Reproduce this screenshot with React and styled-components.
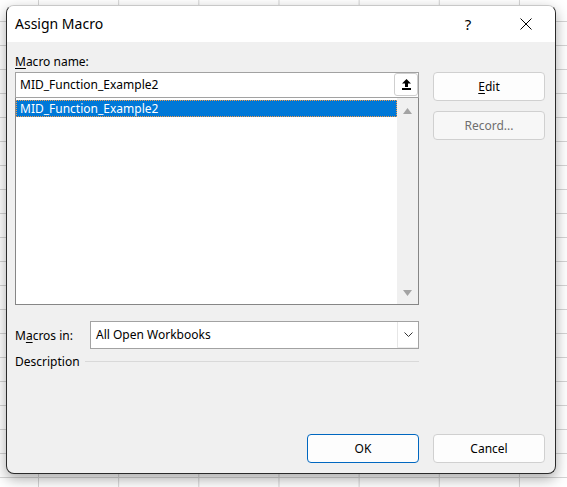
import React from "react";
import styled, { createGlobalStyle } from "styled-components";

const Global = createGlobalStyle`
  html, body { margin: 0; padding: 0; }
  body {
    width: 567px;
    height: 487px;
    overflow: hidden;
    font-family: "Noto Sans", "DejaVu Sans", sans-serif;
    color: #000;
  }
`;

const Sheet = styled.div`
  width: 567px;
  height: 487px;
  box-sizing: border-box;
  padding: 5px 0 0 6px;
  background-color: #ffffff;
  background-image:
    linear-gradient(to right, #d4d4d4 1px, transparent 1px),
    linear-gradient(to bottom, #d4d4d4 1px, transparent 1px);
  background-size: 80.17px 24px;
  background-position: 38px 21px;
`;

const Dialog = styled.div`
  width: 550px;
  height: 469px;
  box-sizing: border-box;
  border: 1px solid #2a2a2a;
  border-top-color: #c8c8c8;
  border-radius: 8px;
  overflow: hidden;
  background: #f0f0f0;
  box-shadow: 0 5px 14px rgba(0, 0, 0, 0.34);
  display: flex;
  flex-direction: column;
`;

const TitleBar = styled.div`
  height: 36px;
  flex: none;
  background: #ffffff;
  display: flex;
  align-items: center;
  padding-left: 8px;
`;

const Title = styled.div`
  flex: 1;
  font-size: 14px;
  line-height: 20px;
`;

const CaptionButton = styled.div`
  width: 58px;
  height: 36px;
  display: flex;
  align-items: center;
  justify-content: center;
  font-size: 15px;
`;

const Body = styled.div`
  flex: 1;
  display: flex;
  flex-direction: column;
  padding: 11px 10px 10px 8px;
  font-size: 12px;
`;

const Columns = styled.div`
  display: grid;
  grid-template-columns: 404px 112px;
  column-gap: 14px;
  align-items: start;
`;

const Label = styled.div`
  line-height: 17px;
  margin-bottom: ${(p) => p.$mb || 0}px;
  white-space: nowrap;
`;

const Key = styled.span`
  text-decoration: underline;
  text-underline-offset: 2px;
`;

const LeftColumn = styled.div`
  display: flex;
  flex-direction: column;
`;

const NameField = styled.div`
  height: 26px;
  box-sizing: border-box;
  border: 1px solid #a2a2a2;
  background: #fff;
  display: flex;
  align-items: flex-start;
`;

const NameText = styled.div`
  flex: 1;
  padding-left: 4px;
  line-height: 24px;
`;

const CollapseButton = styled.div`
  width: 24px;
  height: 23px;
  box-sizing: border-box;
  border: 1px solid #cfcfcf;
  border-radius: 3px;
  background: #fff;
  display: flex;
  align-items: center;
  justify-content: center;
`;

const List = styled.div`
  height: 207px;
  box-sizing: border-box;
  border: 1px solid #868686;
  border-top: none;
  display: flex;
`;

const Items = styled.div`
  flex: 1;
  background: #fff;
  padding-top: 2px;
`;

const Item = styled.div`
  height: 17px;
  box-sizing: border-box;
  background: ${(p) => (p.$selected ? "#0078d7" : "transparent")};
  color: ${(p) => (p.$selected ? "#fff" : "#000")};
  border: 1px dotted ${(p) => (p.$selected ? "#f39b4a" : "transparent")};
  padding-left: 3px;
  line-height: 15px;
  white-space: nowrap;
`;

const ScrollTrack = styled.div`
  width: 21px;
  background: #f0f0f0;
  display: flex;
  flex-direction: column;
  align-items: center;
  justify-content: space-between;
  padding: 10px 0 8px;
  box-sizing: border-box;
`;

const SideButtons = styled.div`
  display: flex;
  flex-direction: column;
  gap: 10px;
  margin-top: 19px;
`;

const Button = styled.div`
  height: 29px;
  box-sizing: border-box;
  width: 112px;
  border: 1px solid ${(p) => (p.$default ? "#0067c0" : "#d0d0d0")};
  border-radius: 4px;
  background: ${(p) => (p.$disabled ? "#f7f7f7" : "#fdfdfd")};
  color: ${(p) => (p.$disabled ? "#6f6f6f" : "#000")};
  display: flex;
  align-items: center;
  justify-content: center;
  font-size: 12px;
  justify-self: ${(p) => p.$align || "start"};
`;

const MacrosRow = styled.div`
  display: flex;
  align-items: center;
  margin-top: 16px;
`;

const RowLabel = styled.div`
  width: 75px;
  flex: none;
`;

const Select = styled.div`
  flex: 1;
  height: 28px;
  box-sizing: border-box;
  border: 1px solid #a2a2a2;
  background: #fff;
  display: flex;
  align-items: stretch;
`;

const SelectText = styled.div`
  flex: 1;
  padding-left: 5px;
  line-height: 26px;
`;

const SelectArrow = styled.div`
  width: 21px;
  box-sizing: border-box;
  border-left: 1px solid #e6e6e6;
  border-bottom: 1px solid #ececec;
  display: flex;
  align-items: center;
  justify-content: center;
`;

const GroupRow = styled.div`
  display: flex;
  align-items: center;
  gap: 5px;
  margin-top: 4px;
  height: 17px;
`;

const GroupLine = styled.div`
  flex: 1;
  height: 1px;
  background: #d9d9d9;
  margin-top: -1px;
`;

const Footer = styled(Columns)`
  margin-top: auto;
`;

const CloseIcon = () => (
  <svg width="12" height="12" viewBox="0 0 12 12">
    <path d="M0.5 0.5 L11.5 11.5 M11.5 0.5 L0.5 11.5" stroke="#000" strokeWidth="1" fill="none" />
  </svg>
);

const UploadIcon = () => (
  <svg width="9" height="11" viewBox="0 0 9 11">
    <path d="M4.5 0 L9 4.5 L6 4.5 L6 8 L3 8 L3 4.5 L0 4.5 Z" fill="#000" />
    <rect x="0" y="9" width="9" height="2" fill="#000" />
  </svg>
);

const Triangle = ({ down }) => (
  <svg width="9" height="6" viewBox="0 0 9 6">
    <path d={down ? "M0 0 L9 0 L4.5 6 Z" : "M4.5 0 L9 6 L0 6 Z"} fill="#a3a3a3" />
  </svg>
);

const Chevron = () => (
  <svg width="9" height="5" viewBox="0 0 9 5">
    <path d="M0.5 0.5 L4.5 4.5 L8.5 0.5" stroke="#333" strokeWidth="1" fill="none" />
  </svg>
);

export default function App() {
  return (
    <>
      <Global />
      <Sheet>
        <Dialog>
          <TitleBar>
            <Title>Assign Macro</Title>
            <CaptionButton>?</CaptionButton>
            <CaptionButton>
              <CloseIcon />
            </CaptionButton>
          </TitleBar>
          <Body>
            <Columns>
              <LeftColumn>
                <Label $mb={2}>
                  <Key>M</Key>acro name:
                </Label>
                <NameField>
                  <NameText>MID_Function_Example2</NameText>
                  <CollapseButton>
                    <UploadIcon />
                  </CollapseButton>
                </NameField>
                <List>
                  <Items>
                    <Item $selected>MID_Function_Example2</Item>
                  </Items>
                  <ScrollTrack>
                    <Triangle />
                    <Triangle down />
                  </ScrollTrack>
                </List>
                <MacrosRow>
                  <RowLabel>
                    M<Key>a</Key>cros in:
                  </RowLabel>
                  <Select>
                    <SelectText>All Open Workbooks</SelectText>
                    <SelectArrow>
                      <Chevron />
                    </SelectArrow>
                  </Select>
                </MacrosRow>
                <GroupRow>
                  <Label>Description</Label>
                  <GroupLine />
                </GroupRow>
              </LeftColumn>
              <SideButtons>
                <Button>
                  <Key>E</Key>dit
                </Button>
                <Button $disabled>Record...</Button>
              </SideButtons>
            </Columns>
            <Footer>
              <Button $default $align="end">OK</Button>
              <Button>Cancel</Button>
            </Footer>
          </Body>
        </Dialog>
      </Sheet>
    </>
  );
}
